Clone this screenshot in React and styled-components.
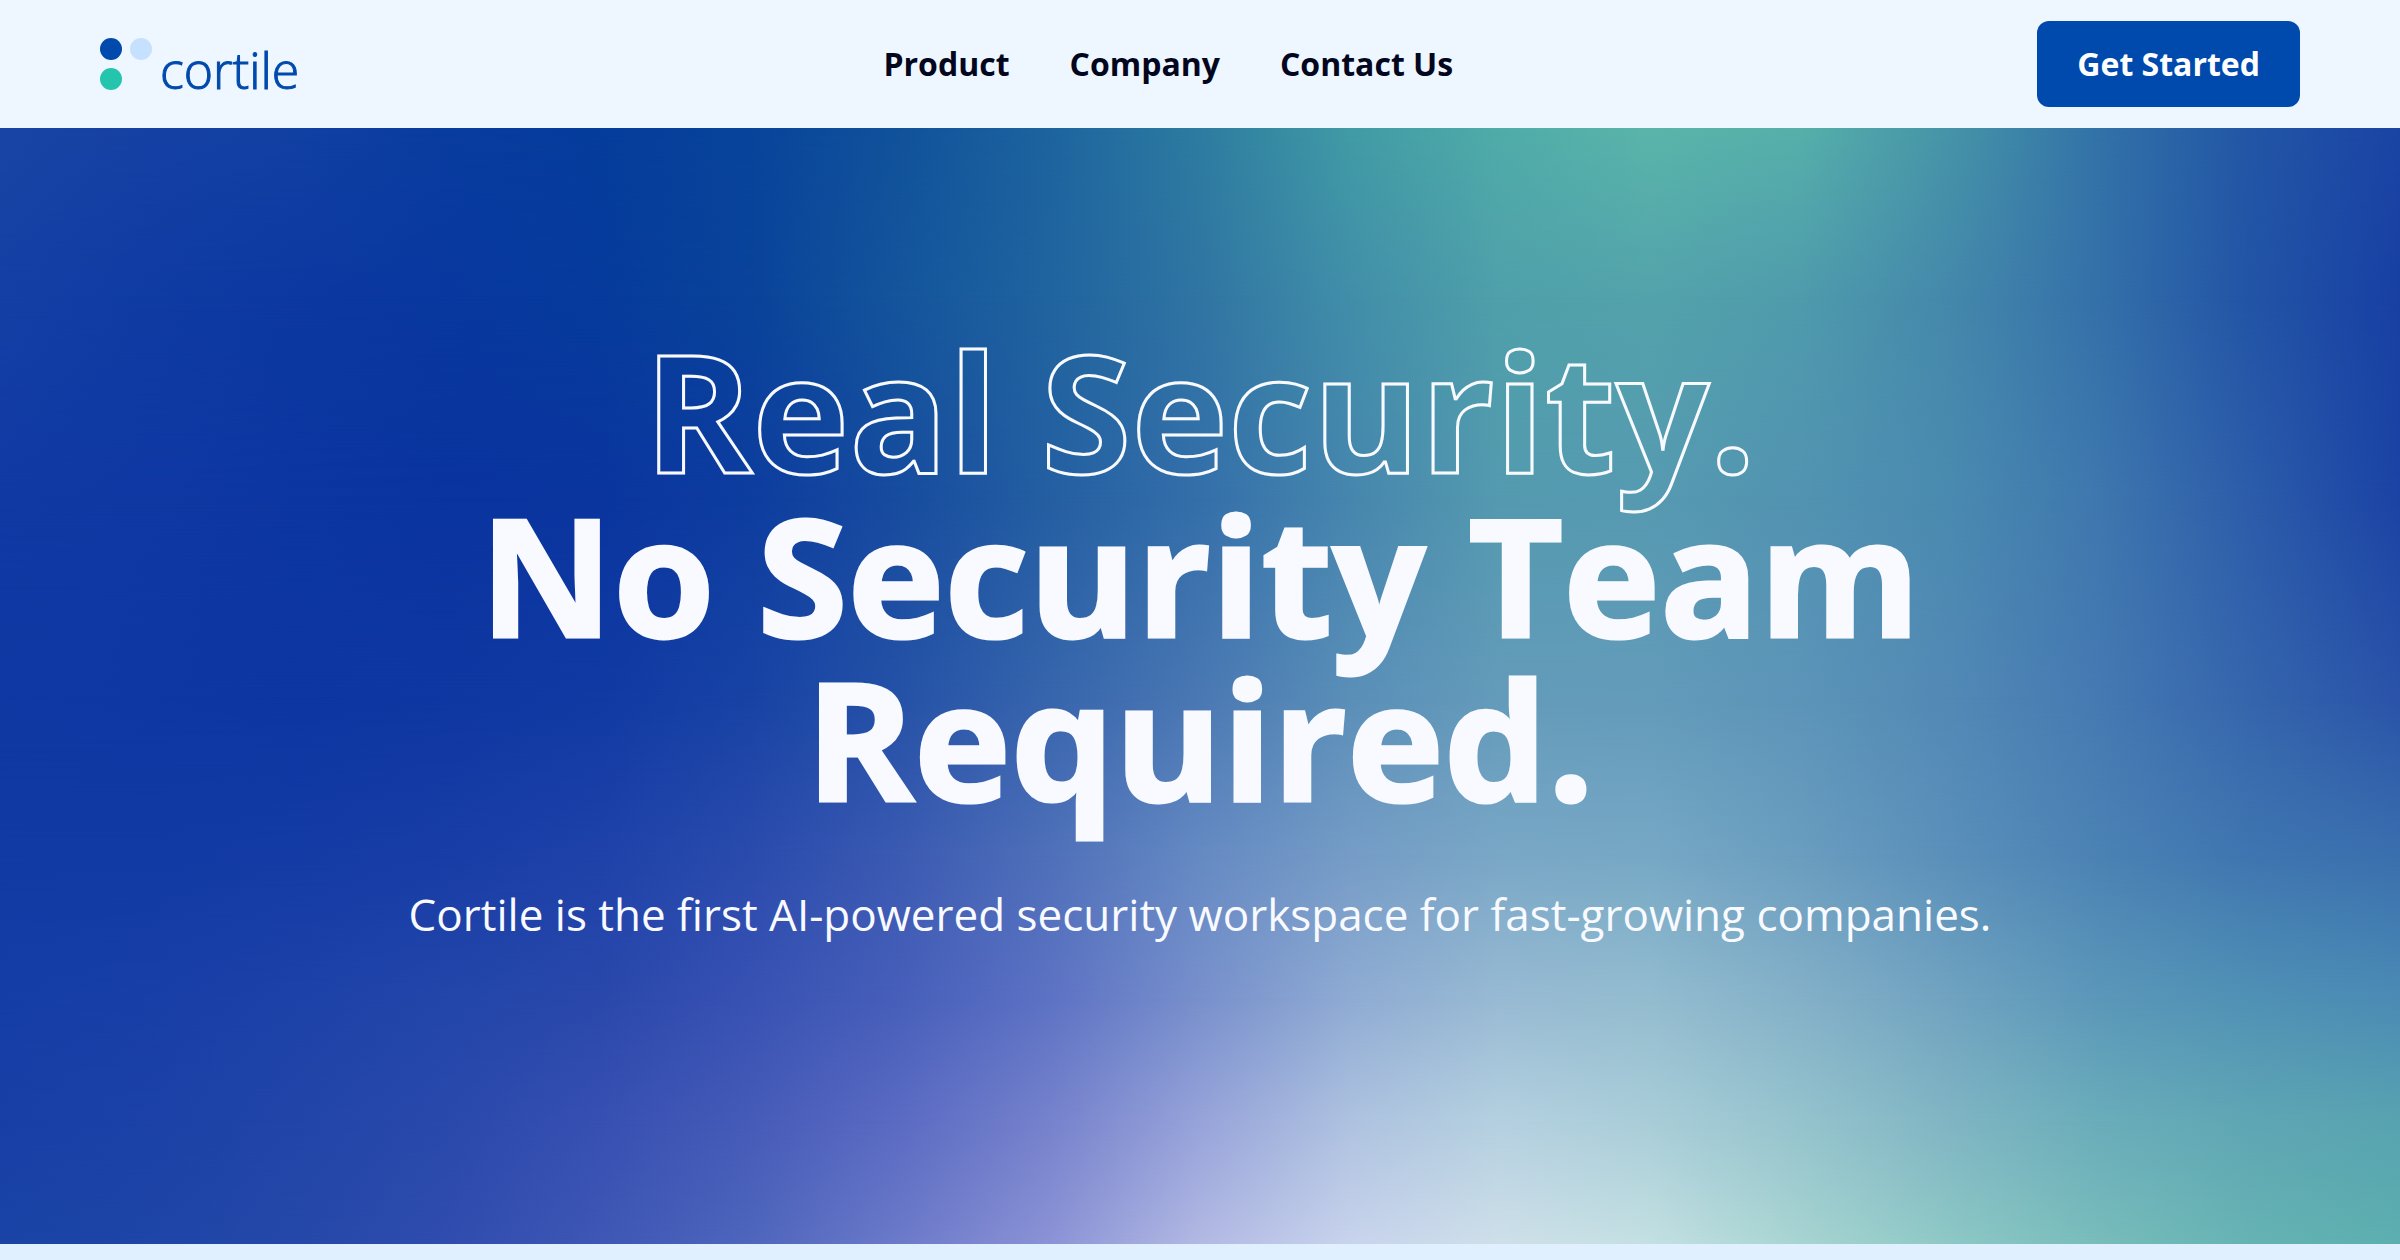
import React from 'react'
import styled, { createGlobalStyle } from 'styled-components'

const GlobalStyle = createGlobalStyle`
  * {
    box-sizing: border-box;
  }

  body {
    margin: 0;
    background-color: #e1f0ff;
    font-family: 'Open Sans', sans-serif;
  }
`

const Header = styled.header`
  display: flex;
  align-items: center;
  justify-content: space-between;
  height: 128px;
  padding: 0 100px;
  background-color: #eef6ff;
`

const Logo = styled.a`
  display: flex;
  align-items: flex-end;
  gap: 8px;
  color: #004aad;
  text-decoration: none;
`

const LogoDots = styled.svg`
  width: 52px;
  height: 52px;
`

const LogoName = styled.span`
  font-size: 50px;
  line-height: 40px;
  font-weight: 300;
  -webkit-text-stroke: 1px #004aad;
`

const Nav = styled.nav`
  display: flex;
  gap: 60px;
`

const NavLink = styled.a`
  color: #03071e;
  font-size: 32px;
  line-height: 44px;
  font-weight: 700;
  text-decoration: none;
`

const Button = styled.button`
  padding: 21px 40px;
  border: none;
  border-radius: 12px;
  background-color: #004aad;
  color: white;
  font-family: inherit;
  font-size: 32px;
  line-height: 44px;
  font-weight: 700;
`

const Hero = styled.main`
  display: grid;
`

const Mesh = styled.div`
  grid-area: 1 / 1;
  display: grid;
`

// each band fades in over the one above it, so the colours blend both ways
const Band = styled.div`
  grid-area: 1 / 1;
  background: linear-gradient(to right, ${props => props.$colors});
  mask-image: linear-gradient(
    to bottom,
    transparent ${props => props.$from}%,
    black ${props => props.$to}%
  );
`

const HeroContent = styled.div`
  grid-area: 1 / 1;
  z-index: 1;
  padding: 200px 100px 300px;
  color: #f9faff;
  text-align: center;
`

const Title = styled.h1`
  max-width: 1600px;
  margin: 0 auto 64px;
  font-size: 164px;
  line-height: 164px;
  font-weight: 700;
  -webkit-text-stroke: 3px #f9faff;
`

const Outline = styled.span`
  display: block;
  color: transparent;
`

const Subtitle = styled.p`
  margin: 0;
  font-size: 44px;
  line-height: 60px;
`

const bands = [
  { at: 0, colors: '#1945a5, #1641a4, #1140a3, #093c9f, #053d9c, #08449b, #11529b, #1d649f, #2d7ca1, #419ba5, #50aca9, #5ab5aa, #56b0aa, #4694a8, #3272a8, #2256a6, #1b44a5' },
  { at: 15, colors: '#1440a5, #0f3ba3, #0c38a1, #08389f, #063b9c, #09439a, #14559c, #20649f, #3075a3, #418ea9, #4fa0aa, #53a3ab, #4f9bac, #4488ab, #3470a9, #2254a6, #1840a4' },
  { at: 33, colors: '#1139a4, #0f38a3, #0c36a1, #0a349f, #0a359f, #0d3d9f, #174c9f, #245fa2, #346faa, #4686ae, #549aaf, #569ab1, #5293b1, #4a8ab0, #3e77ae, #2c5caa, #1b43a5' },
  { at: 51, colors: '#1038a3, #0f37a3, #0d36a2, #0f37a2, #113aa3, #1843a5, #2552a7, #3765ad, #4a78b3, #5a8fb8, #649bba, #639bba, #5c94b8, #5289b5, #4579b2, #3565ad, #2a53a9' },
  { at: 65, colors: '#123aa4, #123aa4, #143ba5, #183da6, #1e42a9, #2a4bad, #3b5ab2, #4f70b9, #658ac3, #759cc6, #79a7c6, #76a8c5, #6a9dbf, #5a8fba, #4b82b4, #3f75b0, #3a6fae' },
  { at: 78, colors: '#153ea6, #183fa7, #1d42a8, #2346aa, #2a48ab, #3852b3, #475fba, #5d72c4, #7890cc, #8fabd3, #98bad3, #93bccf, #84b0c8, #70a3c0, #5b97b9, #5091b5, #4b8bb5' },
  { at: 89, colors: '#183fa6, #1b42a7, #2245a9, #2a49ac, #3750b2, #465bb8, #5b6bc3, #7682cc, #97a3da, #aec2e0, #b4d0e0, #a9cdd8, #95c3cd, #80b5c3, #6aadba, #5fa6b4, #58a3b0' },
  { at: 100, colors: '#1a44a6, #1e45a7, #2548a9, #304dae, #3f57b5, #4e66bc, #6c7ac9, #8c93d6, #b2b9e3, #c8d3ec, #cedfe9, #c3e0e2, #a7d4d1, #8dc8c5, #78bcbb, #66b3b3, #5cafaf' },
]

const links = ['Product', 'Company', 'Contact Us']

const App = () => {
  return (
    <>
      <GlobalStyle />
      <Header>
        <Logo href="#">
          <LogoDots viewBox="0 0 52 52" aria-hidden="true">
            <circle cx="11" cy="11" r="11" fill="#004aad" />
            <circle cx="41" cy="11" r="11" fill="#c6e1ff" />
            <circle cx="11" cy="41" r="11" fill="#25c5ad" />
          </LogoDots>
          <LogoName>cortile</LogoName>
        </Logo>
        <Nav>
          {links.map(link => <NavLink key={link} href="#">{link}</NavLink>)}
        </Nav>
        <Button type="button">Get Started</Button>
      </Header>
      <Hero>
        <Mesh>
          {bands.map((band, i) => (
            <Band
              key={band.at}
              $colors={band.colors}
              $from={i === 0 ? -1 : bands[i - 1].at}
              $to={band.at}
            />
          ))}
        </Mesh>
        <HeroContent>
          <Title>
            <Outline>Real Security.</Outline>
            No Security Team Required.
          </Title>
          <Subtitle>Cortile is the first AI-powered security workspace for fast-growing companies.</Subtitle>
        </HeroContent>
      </Hero>
    </>
  )
}

export default App
